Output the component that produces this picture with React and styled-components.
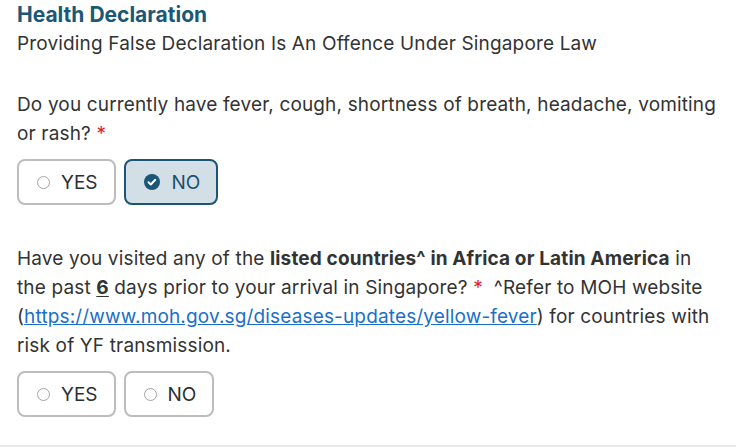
import React, { useState } from "react";
import styled, { createGlobalStyle } from "styled-components";

const GlobalStyle = createGlobalStyle`
  body {
    margin: 0;
    background: #ffffff;
    font-family: Inter, "Noto Sans", sans-serif;
    color: #333333;
  }
`;

const App = () => {
  const [q1, setQ1] = useState("no");
  const [q2, setQ2] = useState(null);

  return (
    <>
      <GlobalStyle />
      <Page>
        <Title>Health Declaration</Title>
        <Subtitle>Providing False Declaration Is An Offence Under Singapore Law</Subtitle>

        <Question>
          <QuestionText>
            Do you currently have fever, cough, shortness of breath, headache, vomiting
            or rash? <Required>*</Required>
          </QuestionText>
          <Options>
            <Choice label="YES" selected={q1 === "yes"} onClick={() => setQ1("yes")} />
            <Choice label="NO" selected={q1 === "no"} onClick={() => setQ1("no")} />
          </Options>
        </Question>

        <Question>
          <QuestionText>
            Have you visited any of the <b>listed countries^ in Africa or Latin America</b> in
            the past <Under>6</Under> days prior to your arrival in Singapore?{" "}
            <Required>*</Required>&nbsp; ^Refer to MOH website (
            <Link href="#">https://www.moh.gov.sg/diseases-updates/yellow-fever</Link>) for
            countries with risk of YF transmission.
          </QuestionText>
          <Options>
            <Choice label="YES" selected={q2 === "yes"} onClick={() => setQ2("yes")} />
            <Choice label="NO" selected={q2 === "no"} onClick={() => setQ2("no")} />
          </Options>
        </Question>
      </Page>
    </>
  );
};

const Choice = ({ label, selected, onClick }) => (
  <ChoiceButton $selected={selected} onClick={onClick}>
    {selected ? (
      <svg width="16" height="16" viewBox="0 0 16 16">
        <circle cx="8" cy="8" r="8" fill="#1c5575" />
        <path d="M4.5 8.3l2.3 2.2 4.5-4.7" stroke="#fff" strokeWidth="2" fill="none" strokeLinecap="round" strokeLinejoin="round" />
      </svg>
    ) : (
      <Dot />
    )}
    <span>{label}</span>
  </ChoiceButton>
);

export default App;

const Page = styled.div`
  width: 736px;
  height: 447px;
  box-sizing: border-box;
  padding: 1px 17px 0;
  border-bottom: 2px solid #e6e8e8;
  overflow: hidden;
`;
const Title = styled.div`
  font-size: 21px;
  font-weight: 700;
  color: #1b5877;
  line-height: 28px;
`;
const Subtitle = styled.div`
  font-size: 19px;
  letter-spacing: 0.15px;
  line-height: 29px;
  color: #333;
`;
const Question = styled.div`
  margin-top: 32px;
  &:last-child {
    margin-top: 39px;
  }
`;
const QuestionText = styled.div`
  font-size: 19px;
  letter-spacing: 0.15px;
  line-height: 29px;
  color: #333;
  b {
    font-weight: 700;
  }
`;
const Required = styled.span`
  color: #e0202a;
`;
const Under = styled.b`
  text-decoration: underline;
  text-underline-offset: 2px;
`;
const Link = styled.a`
  color: #1a6fc9;
  text-decoration: underline;
`;
const Options = styled.div`
  display: flex;
  gap: 8px;
  margin-top: 11px;
`;
const ChoiceButton = styled.button`
  display: flex;
  align-items: center;
  gap: ${(p) => (p.$selected ? "12px" : "11px")};
  height: 46px;
  padding: 0 16px 0 18px;
  border-radius: 8px;
  box-sizing: border-box;
  border: 2px solid ${(p) => (p.$selected ? "#1c5575" : "#bdbdbd")};
  background: ${(p) => (p.$selected ? "#d3dfe6" : "#ffffff")};
  color: ${(p) => (p.$selected ? "#1c4f6b" : "#2b2f33")};
  font-family: Inter, "Noto Sans", sans-serif;
  font-size: 19px;
  cursor: pointer;
`;
const Dot = styled.span`
  width: 13px;
  height: 13px;
  box-sizing: border-box;
  border-radius: 50%;
  border: 1.5px solid #a3a3a3;
`;
